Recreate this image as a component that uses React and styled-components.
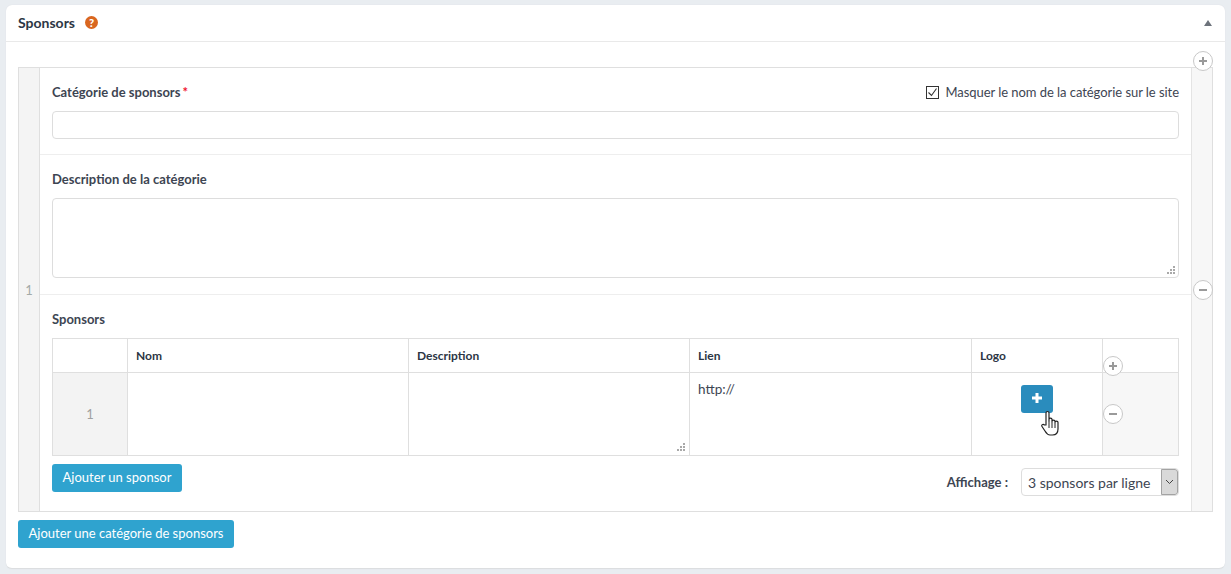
import React from 'react';
import styled, { createGlobalStyle } from 'styled-components';

const GlobalStyle = createGlobalStyle`
  html, body {
    margin: 0;
    padding: 0;
    background: #e9edf1;
    font-family: Lato, "Open Sans", sans-serif;
    color: #3d4552;
  }
  * { box-sizing: border-box; }
`;

const Page = styled.div`
  width: 1231px;
  height: 574px;
  padding: 5px 6px;
  overflow: hidden;
`;

const Card = styled.section`
  height: 564px;
  background: #fff;
  border-radius: 6px;
  border-bottom: 1px solid #dcdee0;
  box-shadow: 0 0 1px #d5d8dc;
`;

const CardHeader = styled.header`
  height: 37px;
  display: flex;
  align-items: center;
  justify-content: space-between;
  padding: 0 13px 1px 12px;
  border-bottom: 1px solid #e9e9e9;
`;

const Title = styled.h2`
  margin: 0;
  display: flex;
  align-items: center;
  gap: 10px;
  font-size: 14px;
  font-weight: 700;
  color: #2c3644;
`;

const HelpIcon = styled.span`
  width: 13px;
  height: 13px;
  border-radius: 50%;
  background: #d9661f;
  color: #fff;
  font-size: 11px;
  font-weight: 900;
  line-height: 13px;
  text-align: center;
`;

const Caret = styled.span`
  width: 0;
  height: 0;
  border-left: 4px solid transparent;
  border-right: 4px solid transparent;
  border-bottom: 6px solid #6d737b;
`;

const CardBody = styled.div`
  padding: 25px 12px 0;
`;

const Repeater = styled.div`
  position: relative;
  height: 445px;
  display: grid;
  grid-template-columns: 21px 1fr 21px;
  border: 1px solid #dfdfdf;
`;

const IndexCol = styled.div`
  display: flex;
  align-items: center;
  justify-content: center;
  padding-top: 1px;
  background: #f4f4f4;
  border-right: 1px solid #dfdfdf;
  color: #a3aaa8;
  font-size: 13px;
`;

const ActionCol = styled.div`
  background: #f7f7f7;
  border-left: 1px solid #e4e4e4;
`;

const Content = styled.div`
  display: flex;
  flex-direction: column;
  min-width: 0;
`;

const Section = styled.div`
  height: ${(p) => p.$height}px;
  padding: ${(p) => p.$top}px 12px 0;
  border-bottom: ${(p) => (p.$last ? 'none' : '1px solid #eeeeee')};
`;

const LabelRow = styled.div`
  display: flex;
  justify-content: space-between;
  align-items: center;
  height: 18px;
  margin-bottom: ${(p) => p.$gap}px;
`;

const Label = styled.label`
  font-size: 13px;
  font-weight: 700;
  color: #3d4552;
`;

const Required = styled.span`
  color: #f0142f;
  margin-left: 2px;
`;

const CheckLabel = styled.label`
  display: flex;
  align-items: center;
  gap: 6px;
  font-size: 13px;
  letter-spacing: -0.05px;
  color: #3d4552;
`;

const CheckBox = styled.span`
  width: 13px;
  height: 13px;
  border: 1px solid #333;
  display: flex;
  align-items: center;
  justify-content: center;
`;

const Input = styled.div`
  height: 28px;
  border: 1px solid #dddddd;
  border-radius: 4px;
  background: #fff;
`;

const TextArea = styled.div`
  position: relative;
  height: 80px;
  border: 1px solid #dddddd;
  border-radius: 4px;
  background: #fff;
`;

const Grip = styled.svg`
  position: absolute;
  right: ${(p) => p.$right}px;
  bottom: ${(p) => p.$bottom}px;
  width: 9px;
  height: 9px;
`;

const Table = styled.table`
  width: 1126px;
  table-layout: fixed;
  border-collapse: collapse;
  font-size: 12px;
  color: #2c3644;
  th, td {
    border: 1px solid #dfdfdf;
    padding: 0;
  }
  th {
    height: 34px;
    text-align: left;
    padding-left: 8px;
    font-weight: 700;
  }
  td {
    height: 83px;
  }
`;

const RowIndex = styled.td`
  background: #f3f3f3;
  color: #a0a0a0;
  text-align: center;
  font-size: 13px;
`;

const DescCell = styled.td`
  position: relative;
`;

const LinkCell = styled.td`
  vertical-align: top;
  font-size: 13.5px;
  color: #3d4552;
  && { padding: 8px 8px 0; }
`;

const LogoCell = styled.td`
  position: relative;
  vertical-align: top;
  && { padding-top: 12px; }
`;

const RowActions = styled.td`
  background: #f7f7f7;
`;

const AddLogo = styled.button`
  display: flex;
  align-items: center;
  justify-content: center;
  width: 32px;
  height: 28px;
  margin-left: 49px;
  padding: 0 0 2px;
  border: 0;
  border-radius: 3px;
  background: #2a8cbd;
  color: #fff;
`;

const HandCursor = styled.svg`
  position: absolute;
  left: 68px;
  top: 37px;
  width: 20px;
  height: 26px;
`;

const TableFooter = styled.div`
  display: flex;
  justify-content: space-between;
  align-items: flex-start;
  margin-top: 8px;
`;

const Button = styled.button`
  display: block;
  height: 28px;
  padding: 0 10.5px 2px;
  border: 0;
  border-radius: 3px;
  background: #2fa3cf;
  color: #fff;
  font-family: inherit;
  font-size: 13px;
`;

const DisplayControl = styled.div`
  display: flex;
  align-items: center;
  gap: 13px;
  margin-top: 4px;
  font-size: 13px;
  font-weight: 700;
  color: #3d4552;
`;

const Select = styled.div`
  width: 158px;
  height: 28px;
  display: flex;
  align-items: center;
  justify-content: space-between;
  padding-left: 6px;
  border: 1px solid #dddddd;
  border-radius: 4px;
  font-size: 14px;
  font-weight: 400;
  overflow: hidden;
`;

const SelectArrow = styled.span`
  width: 17px;
  height: 26px;
  display: flex;
  align-items: center;
  justify-content: center;
  background: #d9d9d9;
  border: 1px solid #a3a3a3;
  border-radius: 0 3px 3px 0;
`;

const CircleButton = styled.span`
  position: absolute;
  left: ${(p) => p.$left}px;
  top: ${(p) => p.$top}px;
  width: 20px;
  height: 20px;
  display: flex;
  align-items: center;
  justify-content: center;
  border: 1px solid #c8c8c8;
  border-radius: 50%;
  background: #fff;
`;

const AddCategory = styled(Button)`
  margin-top: 8px;
`;

function Circle({ left, top, minus }) {
  return (
    <CircleButton $left={left} $top={top}>
      <svg width="10" height="10" viewBox="0 0 10 10">
        <path d="M1 5h8" stroke="#9a9a9a" strokeWidth="2" />
        {!minus && <path d="M5 1v8" stroke="#9a9a9a" strokeWidth="2" />}
      </svg>
    </CircleButton>
  );
}

function ResizeGrip({ right = 2, bottom = 2 }) {
  return (
    <Grip $right={right} $bottom={bottom} viewBox="0 0 9 9" fill="#a9a9a9">
      <rect x="6" y="0" width="2" height="2" />
      <rect x="3" y="3" width="2" height="2" />
      <rect x="6" y="3" width="2" height="2" />
      <rect x="0" y="6" width="2" height="2" />
      <rect x="3" y="6" width="2" height="2" />
      <rect x="6" y="6" width="2" height="2" />
    </Grip>
  );
}

export default function App() {
  return (
    <>
      <GlobalStyle />
      <Page>
        <Card>
          <CardHeader>
            <Title>
              Sponsors <HelpIcon>?</HelpIcon>
            </Title>
            <Caret />
          </CardHeader>
          <CardBody>
            <Repeater>
              <IndexCol>1</IndexCol>
              <Content>
                <Section $height={87} $top={15}>
                  <LabelRow $gap={10}>
                    <Label>
                      Catégorie de sponsors<Required>*</Required>
                    </Label>
                    <CheckLabel>
                      <CheckBox>
                        <svg width="11" height="11" viewBox="0 0 11 11">
                          <path d="M1.500 5.500l3 3 5-7" fill="none" stroke="#333" strokeWidth="1.100" />
                        </svg>
                      </CheckBox>
                      Masquer le nom de la catégorie sur le site
                    </CheckLabel>
                  </LabelRow>
                  <Input />
                </Section>
                <Section $height={140} $top={15}>
                  <LabelRow $gap={10}>
                    <Label>Description de la catégorie</Label>
                  </LabelRow>
                  <TextArea>
                    <ResizeGrip />
                  </TextArea>
                </Section>
                <Section $height={216} $top={15} $last>
                  <LabelRow $gap={10}>
                    <Label>Sponsors</Label>
                  </LabelRow>
                  <Table>
                    <colgroup>
                      <col width="75" />
                      <col width="281" />
                      <col width="281" />
                      <col width="282" />
                      <col width="131" />
                      <col width="76" />
                    </colgroup>
                    <thead>
                      <tr>
                        <th />
                        <th>Nom</th>
                        <th>Description</th>
                        <th>Lien</th>
                        <th>Logo</th>
                        <th />
                      </tr>
                    </thead>
                    <tbody>
                      <tr>
                        <RowIndex>1</RowIndex>
                        <td />
                        <DescCell>
                          <ResizeGrip right={3} bottom={3} />
                        </DescCell>
                        <LinkCell>http://</LinkCell>
                        <LogoCell>
                          <AddLogo aria-label="Ajouter un logo">
                            <svg width="10" height="10" viewBox="0 0 10 10">
                              <path d="M0 5h10M5 0v10" stroke="#fff" strokeWidth="3" />
                            </svg>
                          </AddLogo>
                          <HandCursor viewBox="0 0 20 26">
                            <path
                              d="M6 15V3a1.500 1.500 0 0 1 3 0v8.500V9.600a1.500 1.500 0 0 1 3 0v2a1.500 1.500 0 0 1 3 0v1a1.400 1.400 0 0 1 3 0V19c0 3.500-2 6-5.500 6H10c-2.500 0-3.500-1.500-5-4l-3-4.500c-1-1.500 1-3 2.500-1.500z"
                              fill="#fff"
                              stroke="#222"
                              strokeWidth="1.200"
                              strokeLinejoin="round"
                            />
                            <path d="M9 12v6M12 12v6M15 13v5" stroke="#222" strokeWidth="1" />
                          </HandCursor>
                        </LogoCell>
                        <RowActions />
                      </tr>
                    </tbody>
                  </Table>
                  <TableFooter>
                    <Button>Ajouter un sponsor</Button>
                    <DisplayControl>
                      Affichage :
                      <Select>
                        3 sponsors par ligne
                        <SelectArrow>
                          <svg width="9" height="6" viewBox="0 0 9 6">
                            <path d="M1 1l3.500 3.500L8 1" fill="none" stroke="#444" strokeWidth="1" />
                          </svg>
                        </SelectArrow>
                      </Select>
                    </DisplayControl>
                  </TableFooter>
                </Section>
              </Content>
              <ActionCol />
              <Circle left={1174} top={-17} />
              <Circle left={1174} top={212} minus />
              <Circle left={1084} top={288} />
              <Circle left={1084} top={336} minus />
            </Repeater>
            <AddCategory>Ajouter une catégorie de sponsors</AddCategory>
          </CardBody>
        </Card>
      </Page>
    </>
  );
}
